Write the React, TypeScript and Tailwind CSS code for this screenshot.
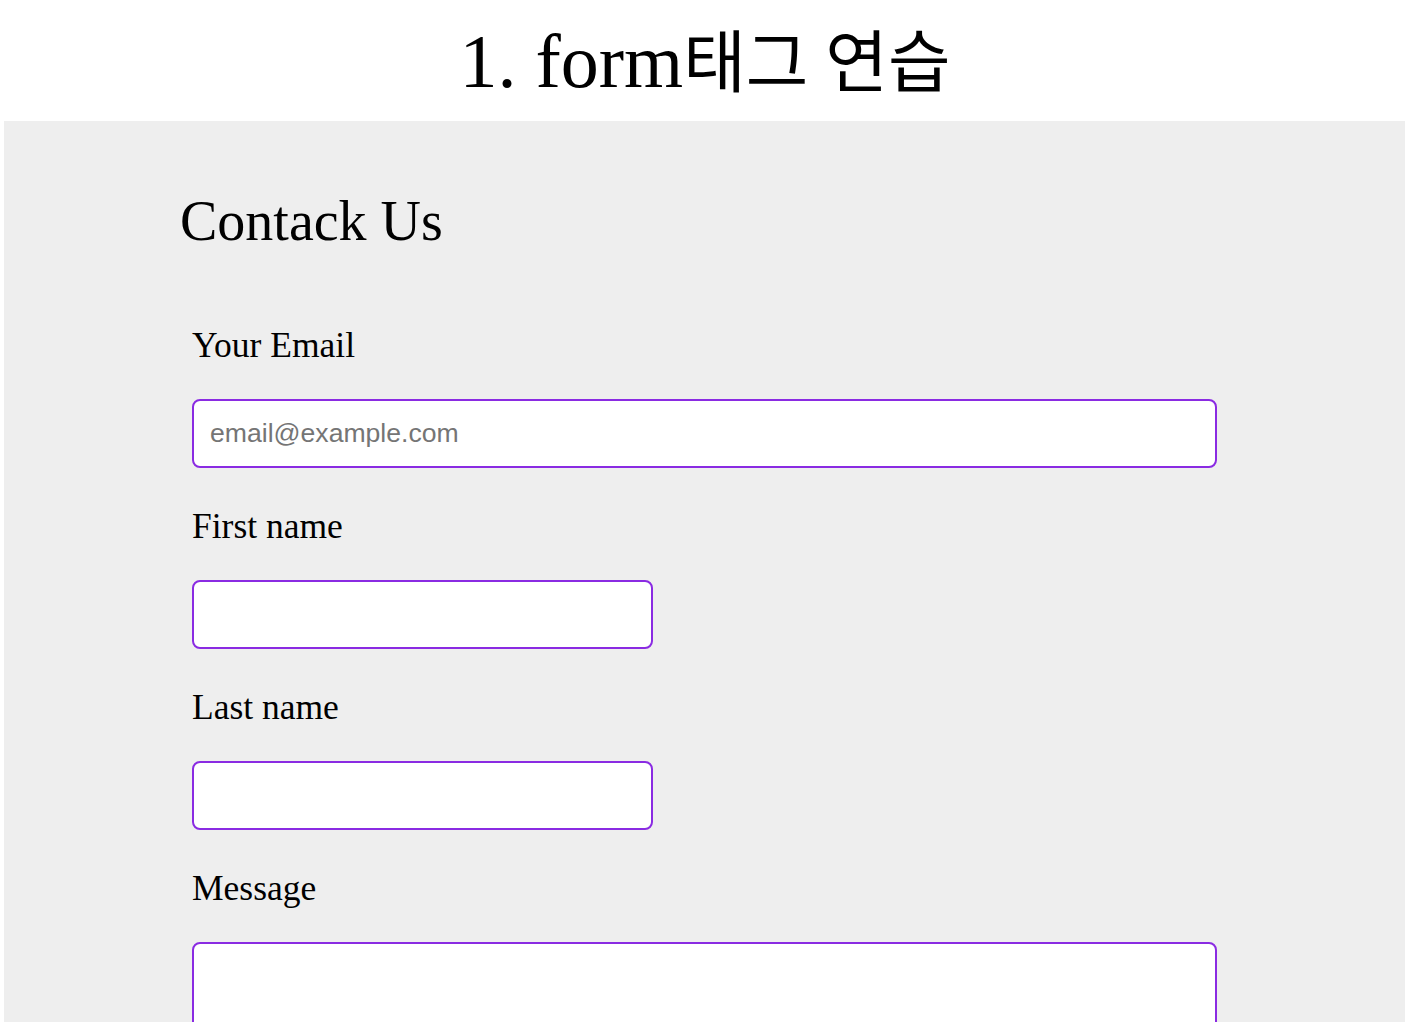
import React from "react";

const serif = "font-['Liberation_Serif','Noto_Sans_CJK_KR',serif]";

const fields = [
  { id: "email", label: "Your Email", type: "email", placeholder: "email@example.com", wide: true },
  { id: "first", label: "First name", type: "text", placeholder: "", wide: false },
  { id: "last", label: "Last name", type: "text", placeholder: "", wide: false },
];

const inputClass =
  "block h-[69px] rounded-[8px] border-2 border-[#8a2be2] bg-white px-4 font-['Liberation_Sans',Arial,sans-serif] text-[26.6px] text-black outline-none placeholder:text-[#757575]";

export default function App() {
  return (
    <div className={`min-h-screen bg-white text-black ${serif}`}>
      <h1 className="h-[121px] pt-[23px] text-center text-[76px] leading-[76px] font-normal">
        1. form<span className="text-[68px]">태그 연습</span>
      </h1>

      <section className="ml-[4px] mr-[5px] min-h-[901px] bg-[#eeeeee] pl-[176px] pt-[72px] pb-10">
        <h2 className="text-[56px] leading-none font-normal">Contack Us</h2>

        <form className="ml-3 mt-[79px] w-[1025px]" onSubmit={(e) => e.preventDefault()}>
          {fields.map((f) => (
            <div key={f.id} className="mb-[41px]">
              <label htmlFor={f.id} className="block h-[34px] text-[35.5px] leading-[34px]">
                {f.label}
              </label>
              <input
                id={f.id}
                type={f.type}
                placeholder={f.placeholder}
                className={`${inputClass} mt-[37px] ${f.wide ? "w-[1025px]" : "w-[461px]"}`}
              />
            </div>
          ))}
          <div>
            <label htmlFor="message" className="block h-[34px] text-[35.5px] leading-[34px]">
              Message
            </label>
            <textarea
              id="message"
              className="mt-[37px] block h-[200px] w-[1025px] resize-none rounded-[8px] border-2 border-[#8a2be2] bg-white p-4 outline-none"
            />
          </div>
        </form>
      </section>
    </div>
  );
}
